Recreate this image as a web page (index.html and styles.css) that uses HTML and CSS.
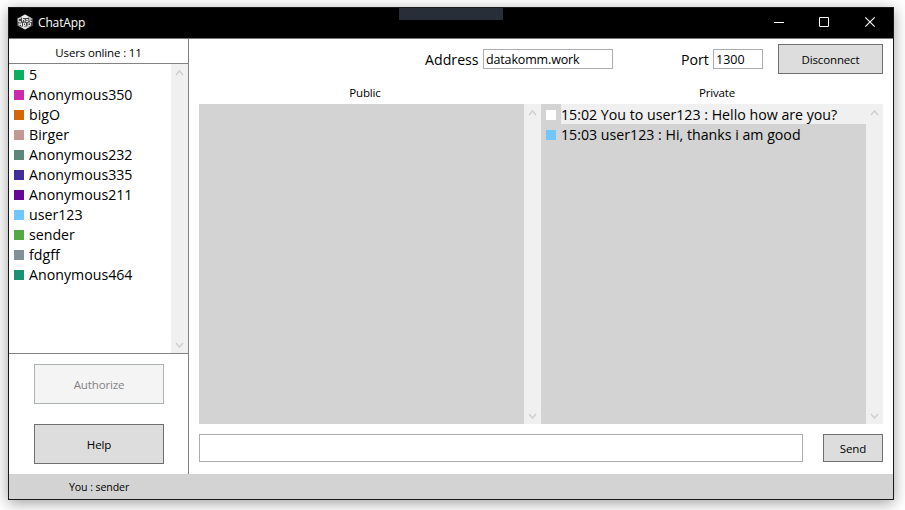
FILE: index.html
```
<!DOCTYPE html>
<html lang="en">
<head>
<meta charset="utf-8">
<title>ChatApp</title>
<link rel="stylesheet" href="styles.css">
</head>
<body>
<div class="window">
  <header class="titlebar">
    <svg class="logo" width="16" height="16" viewBox="0 0 16 16">
      <path d="M8 .5 14.8 4v8L8 15.500 1.200 12V4Z" fill="#999"/>
      <path d="M8 .5 12 3 8 5 4 3Z" fill="#eee"/>
      <path d="M0 4h16v8H0Z" fill="#444"/>
      <path d="M4 4.500H1.200V7.500H4M5.500 3.500V7.500M5.500 5.500H7.500V7.500M9 5.500H11V7.500H9V6.500M13 3.500V7.500H15M12 5H15M2 12V9H4.500V12M2 10.500H4.500M6.500 13V9H8.500V11.500H6.500M11 13V9H13.500V11.500H11" fill="none" stroke="#eee" stroke-width=".9"/>
      <path d="m4 13 4 2.500 4-2.500Z" fill="#ddd"/>
    </svg>
    <span class="title">ChatApp</span>
    <div class="controls">
      <svg width="46" height="30" viewBox="0 0 46 30"><path d="M19 14.500h10" stroke="#fff"/></svg>
      <svg width="46" height="30" viewBox="0 0 46 30"><path d="M18.500 9.500h9v9h-9z" fill="none" stroke="#fff"/></svg>
      <svg width="46" height="30" viewBox="0 0 46 30"><path d="m18.300 9.300 9.400 9.400m0-9.400-9.400 9.400" stroke="#fff" stroke-width="1.100"/></svg>
    </div>
    <div class="tab"></div>
  </header>
  <div class="body">
    <aside class="sidebar">
      <div class="online"><span>Users online : 11</span></div>
      <div class="users">
        <ul class="list">
          <li><i class="swatch c1"></i><span>5</span></li>
          <li><i class="swatch c2"></i><span>Anonymous350</span></li>
          <li><i class="swatch c3"></i><span>bigO</span></li>
          <li><i class="swatch c4"></i><span>Birger</span></li>
          <li><i class="swatch c5"></i><span>Anonymous232</span></li>
          <li><i class="swatch c6"></i><span>Anonymous335</span></li>
          <li><i class="swatch c7"></i><span>Anonymous211</span></li>
          <li><i class="swatch c8"></i><span>user123</span></li>
          <li><i class="swatch c9"></i><span>sender</span></li>
          <li><i class="swatch c10"></i><span>fdgff</span></li>
          <li><i class="swatch c11"></i><span>Anonymous464</span></li>
        </ul>
        <div class="scroll">
          <svg width="17" height="17" viewBox="0 0 17 17"><path d="m5 11 3.500-4 3.500 4"/></svg>
          <svg width="17" height="17" viewBox="0 0 17 17"><path d="m5 7 3.500 4L12 7"/></svg>
        </div>
      </div>
      <div class="actions">
        <button class="btn disabled"><span>Authorize</span></button>
        <button class="btn"><span>Help</span></button>
      </div>
    </aside>
    <main class="main">
      <div class="connect">
        <span class="label address">Address</span>
        <div class="field host"><span>datakomm.work</span></div>
        <span class="label port">Port</span>
        <div class="field number"><span>1300</span></div>
        <button class="btn disconnect"><span>Disconnect</span></button>
      </div>
      <div class="headings"><div><span>Public</span></div><div><span>Private</span></div></div>
      <div class="panes">
        <section class="pane">
          <ul class="list"></ul>
          <div class="scroll">
            <svg width="17" height="17" viewBox="0 0 17 17"><path d="m5 11 3.500-4 3.500 4"/></svg>
            <svg width="17" height="17" viewBox="0 0 17 17"><path d="m5 7 3.500 4L12 7"/></svg>
          </div>
        </section>
        <section class="pane">
          <ul class="list">
            <li><i class="swatch white"></i><div class="selected"><span>15:02 You to user123 : Hello how are you?</span></div></li>
            <li><i class="swatch c8"></i><span>15:03 user123 : Hi, thanks i am good</span></li>
          </ul>
          <div class="scroll">
            <svg width="17" height="17" viewBox="0 0 17 17"><path d="m5 11 3.500-4 3.500 4"/></svg>
            <svg width="17" height="17" viewBox="0 0 17 17"><path d="m5 7 3.500 4L12 7"/></svg>
          </div>
        </section>
      </div>
      <div class="compose">
        <div class="message"></div>
        <button class="btn send"><span>Send</span></button>
      </div>
    </main>
  </div>
  <footer class="status"><span>You : sender</span></footer>
</div>
</body>
</html>
```
FILE: styles.css
```
* { box-sizing: border-box; }
body {
  margin: 0;
  height: 510px;
  padding: 7px 11px 10px 8px;
  overflow: hidden;
  background: #fff;
  font-family: "Open Sans", "Noto Sans", sans-serif;
  font-size: 11.5px;
  letter-spacing: -.15px;
  color: #000;
}
span { white-space: nowrap; }
.window {
  display: flex;
  flex-direction: column;
  width: 886px;
  height: 493px;
  border: 1px solid #161a19;
  background: #fff;
  box-shadow: 0 3px 14px rgba(0, 0, 0, .38);
}
.titlebar {
  position: relative;
  display: flex;
  height: 31px;
  flex: none;
  padding-left: 8px;
  background: #000;
  border-bottom: 1px solid #777;
  color: #fff;
}
.logo { margin-top: 6px; }
.title { margin-left: 5px; font-size: 12px; line-height: 29px; letter-spacing: -.15px; }
.controls { display: flex; margin-left: auto; }
.tab { position: absolute; left: 390px; top: 0; width: 104px; height: 12px; background: #272e38; }
.body { display: flex; height: 435px; flex: none; }
.sidebar { width: 180px; border-right: 1px solid #828282; }
.online { height: 25px; line-height: 28px; text-align: center; border-bottom: 1px solid #828282; }
.users { display: flex; height: 290px; border-bottom: 1px solid #828282; }
.list { flex: 1; margin: 0; padding: 0 0 0 5px; list-style: none; }
.list li { display: flex; height: 20px; font-size: 14.2px; line-height: 22px; letter-spacing: 0; }
.swatch { width: 10px; height: 10px; margin: 6px 5px 0 0; flex: none; }
.selected { flex: 1; height: 20px; background: #f0f0f0; }
.white { background: #fff; }
.c1 { background: #0bad5e; }
.c2 { background: #c82bab; }
.c3 { background: #d56607; }
.c4 { background: #c39993; }
.c5 { background: #5d8878; }
.c6 { background: #412d96; }
.c7 { background: #640993; }
.c8 { background: #72c6fd; }
.c9 { background: #56a846; }
.c10 { background: #829199; }
.c11 { background: #1c9072; }
.scroll { display: flex; flex-direction: column; justify-content: space-between; width: 17px; background: #f0f0f0; }
.scroll path { fill: none; stroke: #d0d0d0; stroke-width: 1.5; }
.actions { display: flex; flex-direction: column; gap: 20px; padding: 10px 24px 0 25px; }
.btn {
  height: 40px;
  padding: 0;
  border: 1px solid #707070;
  border-radius: 0;
  background: #ddd;
  color: #000;
  font: inherit;
  letter-spacing: inherit;
}
.disabled { background: #f4f4f4; border-color: #adb2b5; color: #838383; }
.main { width: 704px; padding: 5px 10px 0; }
.connect { display: flex; align-items: center; height: 30px; }
.label { font-size: 14.2px; line-height: 20px; padding-top: 2px; letter-spacing: 0; }
.address { width: 54px; margin-left: 226px; }
.port { width: 28px; margin-left: 68px; }
.field { height: 20px; border: 1px solid #abadb3; line-height: 19px; font-size: 12.5px; }
.host { width: 130px; margin-left: 4px; padding-left: 2px; }
.number { width: 50px; margin-left: 4px; padding-left: 2px; letter-spacing: 0; }
.disconnect { width: 105px; height: 30px; margin-left: 15px; }
.headings { display: flex; gap: 20px; height: 30px; line-height: 38px; text-align: center; }
.headings div { width: 332px; }
.panes { display: flex; height: 320px; }
.pane { display: flex; width: 342px; background: #d3d3d3; }
.compose { display: flex; justify-content: space-between; margin-top: 10px; }
.message { width: 604px; height: 28px; border: 1px solid #abadb3; }
.send { width: 60px; height: 28px; }
.status { height: 25px; flex: none; padding-left: 60px; background: #d3d3d3; font-size: 10.6px; line-height: 26px; letter-spacing: -.1px; }
```
